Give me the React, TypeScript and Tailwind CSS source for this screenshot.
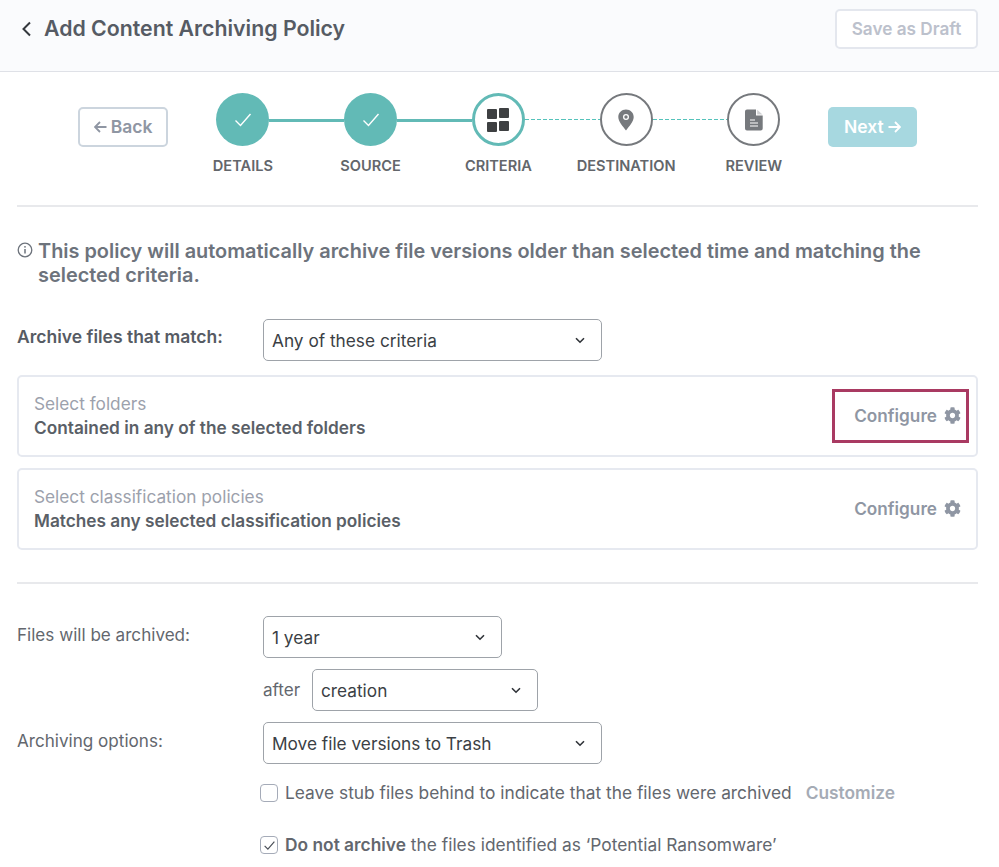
import React from "react";

const Check = ({ size = 20, cls = "text-white", sw = 1.4 }: { size?: number; cls?: string; sw?: number }) => (
  <svg width={size} height={size} viewBox="0 0 20 20" fill="none" className={cls}>
    <path d="M2.5 10.5 L7.5 15.5 L17.5 4" stroke="currentColor" strokeWidth={sw} />
  </svg>
);

const Chevron = () => (
  <svg width="10" height="7" viewBox="0 0 10 7" fill="none">
    <path d="M1 1.2 L5 5.2 L9 1.2" stroke="#2f3338" strokeWidth="1.6" />
  </svg>
);

const Gear = () => (
  <svg className="-mt-[1px]" width="17" height="17" viewBox="0 0 512 512" fill="#8f96a3">
    <path d="M487.4 315.7l-42.6-24.6c4.3-23.2 4.3-47 0-70.2l42.6-24.6c4.9-2.8 7.1-8.6 5.5-14-11.1-35.6-30-67.8-54.7-94.6-3.8-4.1-10-5.1-14.8-2.3L380.8 110c-17.9-15.4-38.5-27.3-60.8-35.1V25.8c0-5.6-3.9-10.5-9.4-11.7-36.7-8.2-74.3-7.8-109.2 0-5.5 1.2-9.4 6.1-9.4 11.7V75c-22.2 7.9-42.8 19.8-60.8 35.1L88.7 85.5c-4.9-2.8-11-1.9-14.8 2.3-24.7 26.7-43.6 58.9-54.7 94.6-1.7 5.4.6 11.2 5.5 14L67.3 221c-4.3 23.2-4.3 47 0 70.2l-42.6 24.6c-4.9 2.8-7.1 8.6-5.5 14 11.1 35.6 30 67.8 54.7 94.6 3.8 4.1 10 5.1 14.8 2.3l42.6-24.6c17.9 15.4 38.5 27.3 60.8 35.1v49.2c0 5.6 3.9 10.5 9.4 11.7 36.7 8.2 74.3 7.8 109.2 0 5.5-1.2 9.4-6.1 9.4-11.7v-49.2c22.2-7.9 42.8-19.8 60.8-35.1l42.6 24.6c4.9 2.8 11 1.9 14.8-2.3 24.7-26.7 43.6-58.9 54.7-94.6 1.5-5.5-.7-11.3-5.6-14.1zM256 336c-44.1 0-80-35.9-80-80s35.9-80 80-80 80 35.9 80 80-35.9 80-80 80z" />
  </svg>
);

const Select = ({ label, w }: { label: string; w: string }) => (
  <div className={`${w} h-[42px] flex items-center justify-between pl-[8px] pr-[16px] bg-white border border-[#9ea3a9] rounded-[5px] text-[17.25px] text-[#3b3f45]`}>
    <span className="mt-[1px]">{label}</span>
    <Chevron />
  </div>
);

const Step = ({
  label, first, last, leftDashed, rightDashed, children, circle,
}: {
  label: string; first?: boolean; last?: boolean; leftDashed?: boolean; rightDashed?: boolean; children: React.ReactNode; circle: string;
}) => {
  const solid = "flex-1 h-[3px] mt-[2px] bg-[#62bab6]";
  const dash = "flex-1 h-[1px] bg-[repeating-linear-gradient(90deg,#55c3bb_0_4px,transparent_4px_6px)]";
  return (
    <div className="w-[127.75px] flex flex-col items-center">
      <div className="w-full flex items-center">
        <div className={first ? "flex-1" : leftDashed ? dash : solid} />
        <div className={`w-[53px] h-[53px] shrink-0 rounded-full flex items-center justify-center ${circle}`}>{children}</div>
        <div className={last ? "flex-1" : rightDashed ? dash : solid} />
      </div>
      <div className="mt-[11px] text-[14.6px] leading-[18px] font-semibold text-[#63666b] whitespace-nowrap">{label}</div>
    </div>
  );
};

const Card = ({ title, sub, highlighted, mt }: { title: string; sub: string; highlighted?: boolean; mt: string }) => (
  <div className={`${mt} h-[82px] border-2 border-[#e6e9f0] rounded-[5px] flex items-center justify-between pl-[15px] pr-[15px]`}>
    <div>
      <div className="text-[17.25px] leading-[24px] text-[#9ca1ac]">{title}</div>
      <div className="text-[17.25px] leading-[24px] font-semibold text-[#5a5f67]">{sub}</div>
    </div>
    <div className={`-mr-[8px] h-[54px] w-[137px] pr-[5px] flex items-center justify-end gap-[7px] border-[3px] ${highlighted ? "border-[#a93a62]" : "border-transparent"}`}>
      <span className="text-[17.2px] font-semibold text-[#8f96a3]">Configure</span>
      <Gear />
    </div>
  </div>
);

export default function App() {
  return (
    <div className="w-[999px] h-[867px] overflow-hidden bg-white font-['Inter',sans-serif]">
      <header className="h-[72px] bg-[#fafbfd] border-b border-[#dfe1e7] flex items-center justify-between pl-[21px] pr-[21px] pb-[13px]">
        <div className="flex items-center gap-[12px]">
          <svg width="11" height="16" viewBox="0 0 11 16" fill="none">
            <path d="M9 1.5 L2.5 8 L9 14.5" stroke="#34383d" strokeWidth="2" />
          </svg>
          <h1 className="text-[21.3px] font-semibold text-[#565b64]">Add Content Archiving Policy</h1>
        </div>
        <button className="w-[143px] h-[40px] bg-white border-2 border-[#e4e7ee] rounded-[5px] text-[17.2px] font-semibold text-[#bcc1cc]">Save as Draft</button>
      </header>

      <main className="px-[17px] pr-[21px]">
        <div className="h-[135px] border-b-2 border-[#e8e9ec] flex items-start pt-[21px] pl-[61px]">
          <button className="mt-[14px] w-[90px] h-[40px] border-2 border-[#ccd5de] rounded-[5px] text-[17.5px] font-semibold text-[#8f96a3] flex items-center justify-center gap-[4px]">
            <svg width="13" height="12" viewBox="0 0 13 12" fill="none"><path d="M12.5 6 H1.5 M6 1 L1 6 L6 11" stroke="currentColor" strokeWidth="1.8" /></svg>
            Back
          </button>
          <div className="ml-[11px] flex items-start">
            <Step first label="DETAILS" circle="bg-[#62bab6]"><Check /></Step>
            <Step label="SOURCE" circle="bg-[#62bab6]"><Check /></Step>
            <Step rightDashed label="CRITERIA" circle="border-[3px] border-[#62bab6]">
              <div className="grid grid-cols-2 gap-[2px]">
                <div className="w-[10px] h-[10px] mt-[1px] bg-[#3e4042] rounded-[1px]" />
                <div className="w-[10px] h-[10px] bg-[#3e4042] rounded-[1px]" />
                <div className="w-[10px] h-[10px] mt-[1px] bg-[#3e4042] rounded-[1px]" />
                <div className="w-[10px] h-[10px] bg-[#3e4042] rounded-[1px]" />
              </div>
            </Step>
            <Step leftDashed rightDashed label="DESTINATION" circle="border-2 border-[#76797d]">
              <svg width="16" height="22" viewBox="0 0 16 22">
                <path fillRule="evenodd" fill="#76797d" d="M8 0.5 C3.6 0.5 0.3 3.8 0.3 8 C0.3 12.5 5 17.5 8 21.5 C11 17.5 15.7 12.5 15.7 8 C15.7 3.8 12.4 0.5 8 0.5 Z M8 5 A3 3 0 1 1 8 11 A3 3 0 1 1 8 5 Z M8 6.3 A1.7 1.7 0 1 0 8 9.7 A1.7 1.7 0 1 0 8 6.3 Z" />
              </svg>
            </Step>
            <Step last leftDashed label="REVIEW" circle="border-2 border-[#76797d]">
              <svg width="18" height="22" viewBox="0 0 18 22">
                <path fill="#76797d" d="M2 0.5 H11 V6.5 H17.7 V19.5 A2 2 0 0 1 15.7 21.5 H2 A2 2 0 0 1 0 19.5 V2.5 A2 2 0 0 1 2 0.5 Z" />
                <path fill="#76797d" d="M12.2 0.8 L17.5 5.5 H12.2 Z" opacity="0.35" />
                <path d="M5 11 H10 M5 14 H13 M5 17 H13" stroke="#fff" strokeWidth="1.2" />
              </svg>
            </Step>
          </div>
          <button className="ml-[10px] mt-[14px] w-[89px] h-[40px] bg-[#a7d8e0] rounded-[5px] text-[17.5px] font-semibold text-white flex items-center justify-center gap-[4px]">
            Next
            <svg width="13" height="12" viewBox="0 0 13 12" fill="none"><path d="M0.5 6 H11.5 M7 1 L12 6 L7 11" stroke="currentColor" strokeWidth="1.8" /></svg>
          </button>
        </div>

        <div className="mt-[32px] flex gap-[5px]">
          <svg className="mt-[3px] shrink-0" width="16" height="16" viewBox="0 0 16 16" fill="none">
            <circle cx="8" cy="8" r="6.8" stroke="#6d737c" strokeWidth="1.3" />
            <path d="M8 7 V11.5" stroke="#6d737c" strokeWidth="1.5" />
            <circle cx="8" cy="4.8" r="0.9" fill="#6d737c" />
          </svg>
          <p className="text-[19.9px] leading-[24px] font-semibold text-[#6d737c]">
            This policy will automatically archive file versions older than selected time and matching the selected criteria.
          </p>
        </div>

        <div className="mt-[32px] flex items-center">
          <div className="w-[246px] -mt-[6px] text-[17.5px] font-semibold text-[#565b64]">Archive files that match:</div>
          <Select w="w-[339px]" label="Any of these criteria" />
        </div>

        <Card mt="mt-[14px]" title="Select folders" sub="Contained in any of the selected folders" highlighted />
        <Card mt="mt-[11px]" title="Select classification policies" sub="Matches any selected classification policies" />

        <div className="mt-[32px] border-t-2 border-[#e8e9ec]" />

        <div className="mt-[32px] flex items-center">
          <div className="w-[246px] text-[17.1px] text-[#63676e] -mt-[5px]">Files will be archived:</div>
          <Select w="w-[239px]" label="1 year" />
        </div>
        <div className="mt-[11px] ml-[246px] flex items-center">
          <span className="w-[49px] text-[17.1px] text-[#63676e]">after</span>
          <Select w="w-[226px]" label="creation" />
        </div>
        <div className="mt-[11px] flex items-center">
          <div className="w-[246px] text-[17.1px] text-[#63676e] -mt-[5px]">Archiving options:</div>
          <Select w="w-[339px]" label="Move file versions to Trash" />
        </div>
        <div className="mt-[16px] ml-[243px] flex items-center">
          <div className="w-[18px] h-[18px] border border-[#a5abb8] rounded-[4px]" />
          <span className="ml-[7px] text-[17.35px] text-[#63676e]">Leave stub files behind to indicate that the files were archived</span>
          <span className="ml-[14px] text-[17.35px] font-semibold text-[#a5abb5]">Customize</span>
        </div>
        <div className="mt-[26px] ml-[243px] flex items-center">
          <div className="w-[18px] h-[18px] border border-[#a5abb8] rounded-[4px] flex items-center justify-center">
            <Check size={13} cls="text-[#4a4f57]" sw={1.8} />
          </div>
          <span className="ml-[7px] text-[17.35px] text-[#63676e]"><b className="font-semibold">Do not archive</b> the files identified as ‘Potential Ransomware’</span>
        </div>
      </main>
    </div>
  );
}
